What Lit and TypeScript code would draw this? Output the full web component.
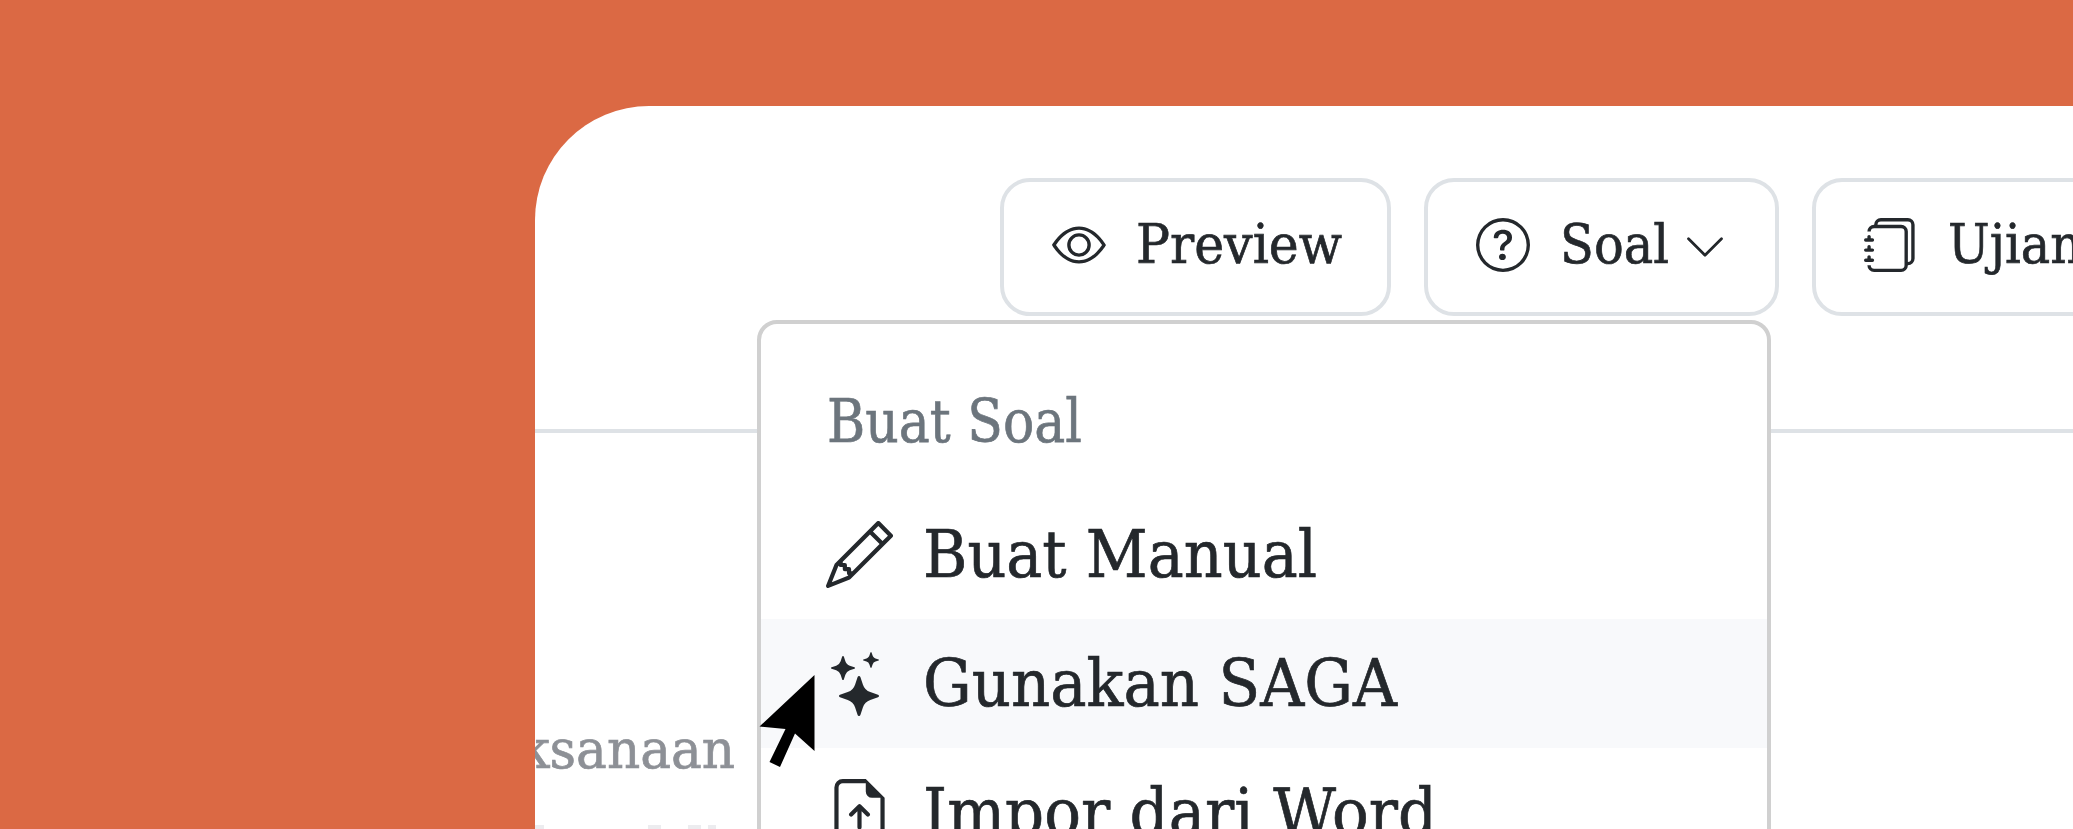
import { LitElement, html, css, svg } from "lit";
import { customElement, property } from "lit/decorators.js";

const ICONS: Record<string, string[]> = {
  eye: [
    "M16 8s-3-5.5-8-5.5S0 8 0 8s3 5.5 8 5.5S16 8 16 8M1.173 8a13 13 0 0 1 1.66-2.043C4.12 4.668 5.88 3.5 8 3.5s3.879 1.168 5.168 2.457A13 13 0 0 1 14.828 8q-.086.13-.195.288c-.335.48-.83 1.12-1.465 1.755C11.879 11.332 10.119 12.5 8 12.5s-3.879-1.168-5.168-2.457A13 13 0 0 1 1.172 8z",
    "M8 5.5a2.5 2.5 0 1 0 0 5 2.5 2.5 0 0 0 0-5M4.5 8a3.5 3.5 0 1 1 7 0 3.5 3.5 0 0 1-7 0",
  ],
  question: [
    "M8 15A7 7 0 1 1 8 1a7 7 0 0 1 0 14m0 1A8 8 0 1 0 8 0a8 8 0 0 0 0 16",
    "M5.255 5.786a.237.237 0 0 0 .241.247h.825c.138 0 .248-.113.266-.25.09-.656.54-1.134 1.342-1.134.686 0 1.314.343 1.314 1.168 0 .635-.374.927-.965 1.371-.673.489-1.206 1.06-1.168 1.987l.003.217a.25.25 0 0 0 .25.246h.811a.25.25 0 0 0 .25-.25v-.105c0-.718.273-.927 1.01-1.486.609-.463 1.244-.977 1.244-2.056 0-1.511-1.276-2.241-2.673-2.241-1.267 0-2.655.59-2.75 2.286m1.557 5.763c0 .533.425.927 1.01.927.609 0 1.028-.394 1.028-.927 0-.552-.42-.94-1.029-.94-.584 0-1.009.388-1.009.94",
  ],
  journals: [
    "M5 0h8a2 2 0 0 1 2 2v10a2 2 0 0 1-2 2 2 2 0 0 1-2 2H3a2 2 0 0 1-2-2h1a1 1 0 0 0 1 1h8a1 1 0 0 0 1-1V4a1 1 0 0 0-1-1H3a1 1 0 0 0-1 1H1a2 2 0 0 1 2-2h8a2 2 0 0 1 2 2v9a1 1 0 0 0 1-1V2a1 1 0 0 0-1-1H5a1 1 0 0 0-1 1H3a2 2 0 0 1 2-2",
    "M1 6v-.5a.5.5 0 0 1 1 0V6h.5a.5.5 0 0 1 0 1h-2a.5.5 0 0 1 0-1zm0 3v-.5a.5.5 0 0 1 1 0V9h.5a.5.5 0 0 1 0 1h-2a.5.5 0 0 1 0-1zm0 2.5v.5H.5a.5.5 0 0 0 0 1h2a.5.5 0 0 0 0-1H2v-.5a.5.5 0 0 0-1 0",
  ],
  pencil: [
    "M12.146.146a.5.5 0 0 1 .708 0l3 3a.5.5 0 0 1 0 .708l-10 10a.5.5 0 0 1-.168.11l-5 2a.5.5 0 0 1-.65-.65l2-5a.5.5 0 0 1 .11-.168zM11.207 2.5 13.5 4.793 14.793 3.5 12.5 1.207zm1.586 3L10.5 3.207 4 9.707V10h.5a.5.5 0 0 1 .5.5v.5h.5a.5.5 0 0 1 .5.5v.5h.293zm-9.761 5.175-.106.106-1.528 3.821 3.821-1.528.106-.106A.5.5 0 0 1 5 12.5V12h-.5a.5.5 0 0 1-.5-.5V11h-.5a.5.5 0 0 1-.468-.325",
  ],
  stars: [
    "M7.657 6.247c.11-.33.576-.33.686 0l.645 1.937a2.89 2.89 0 0 0 1.829 1.828l1.936.645c.33.11.33.576 0 .686l-1.937.645a2.89 2.89 0 0 0-1.828 1.829l-.645 1.936a.361.361 0 0 1-.686 0l-.645-1.937a2.89 2.89 0 0 0-1.828-1.828l-1.937-.645a.361.361 0 0 1 0-.686l1.937-.645a2.89 2.89 0 0 0 1.828-1.828zM3.794 1.148a.217.217 0 0 1 .412 0l.387 1.162c.173.518.579.924 1.097 1.097l1.162.387a.217.217 0 0 1 0 .412l-1.162.387A1.73 1.73 0 0 0 4.593 5.69l-.387 1.162a.217.217 0 0 1-.412 0L3.407 5.69A1.73 1.73 0 0 0 2.31 4.593l-1.162-.387a.217.217 0 0 1 0-.412l1.162-.387A1.73 1.73 0 0 0 3.407 2.31zM10.863.099a.145.145 0 0 1 .274 0l.258.774c.115.346.386.617.732.732l.774.258a.145.145 0 0 1 0 .274l-.774.258a1.16 1.16 0 0 0-.732.732l-.258.774a.145.145 0 0 1-.274 0l-.258-.774a1.16 1.16 0 0 0-.732-.732L9.1 2.137a.145.145 0 0 1 0-.274l.774-.258c.346-.115.617-.386.732-.732z",
  ],
  upload: [
    "M8.5 11.5a.5.5 0 0 1-1 0V7.707L6.354 8.854a.5.5 0 1 1-.708-.708l2-2a.5.5 0 0 1 .708 0l2 2a.5.5 0 0 1-.708.708L8.5 7.707z",
    "M14 14V4.5L9.5 0H4a2 2 0 0 0-2 2v12a2 2 0 0 0 2 2h8a2 2 0 0 0 2-2M9.5 3A1.5 1.5 0 0 0 11 4.5h2V14a1 1 0 0 1-1 1H4a1 1 0 0 1-1-1V2a1 1 0 0 1 1-1h5.5z",
  ],
  chevron: [
    "M1.646 4.646a.5.5 0 0 1 .708 0L8 10.293l5.646-5.647a.5.5 0 0 1 .708.708l-6 6a.5.5 0 0 1-.708 0l-6-6a.5.5 0 0 1 0-.708",
  ],
};

@customElement("ui-icon")
class UiIcon extends LitElement {
  @property() name = "eye";
  @property({ type: Number }) size = 54;
  static styles = css`
    :host { display: block; flex: none; }
    svg { display: block; fill: currentColor; }
  `;
  render() {
    return html`<svg width=${this.size} height=${this.size} viewBox="0 0 16 16">
      ${ICONS[this.name].map((d) => svg`<path d=${d}></path>`)}
    </svg>`;
  }
}

/* Serif label fitted to a fixed advance width. */
@customElement("fit-label")
class FitLabel extends LitElement {
  @property() text = "";
  @property({ type: Number }) width = 100;
  @property({ type: Number }) size = 55;
  static styles = css`
    :host { display: block; flex: none; }
    svg { display: block; overflow: visible; }
    text {
      font-family: "DejaVu Serif", serif;
      fill: currentColor; stroke: currentColor; stroke-width: 0.7px;
    }
  `;
  render() {
    return html`<svg width=${this.width} height=${this.size}>
      <text x="0" y=${this.size * 0.8} font-size=${this.size}
        textLength=${this.width} lengthAdjust="spacingAndGlyphs">${this.text}</text>
    </svg>`;
  }
}

@customElement("app-root")
class AppRoot extends LitElement {
  static styles = css`
    :host { display: block; }
    .stage {
      height: 829px; box-sizing: border-box; overflow: hidden;
      padding: 106px 0 0 535px; background: #db6944; color: #24282c;
    }
    .card {
      position: relative; height: 723px; overflow: hidden;
      background: #fff; border-top-left-radius: 114px;
    }
    .toolbar {
      display: flex; align-items: flex-start; gap: 33px;
      box-sizing: border-box; height: 327px; padding: 72px 0 0 465px;
      border-bottom: 4px solid #dee2e6;
    }
    .btn {
      display: flex; align-items: center; flex: none; box-sizing: border-box;
      height: 138px; padding: 0 45px 4px 48px;
      border: 4px solid #dee2e6; border-radius: 30px; background: #fff;
    }
    .btn.drop { padding-right: 48px; }
    .btn fit-label { margin-left: 30px; padding-top: 3px; }
    .btn .caret { margin-left: 14px; padding-top: 3px; }
    .facts { width: 200px; padding-top: 291px; color: #8d9096; }
    .facts .row { display: flex; justify-content: flex-end; margin-bottom: 46px; }
    .peek {
      display: grid; grid-template-columns: 9px 13px 13px 8px 7px;
      column-gap: 0; height: 4px; width: 230px;
    }
    .peek { grid-template-columns: 9px 104px 13px 27px 13px 7px 8px; }
    .peek i { background: #ececef; }
    .menu {
      position: absolute; left: 222px; top: 214px; width: 1014px; height: 560px;
      box-sizing: border-box; border: 4px solid #d0d0d0; border-radius: 20px;
      background: #fff; padding-top: 71px;
    }
    .heading { padding-left: 66px; height: 95px; color: #6c757d; }
    .item {
      display: flex; align-items: center; gap: 30px;
      height: 129px; box-sizing: border-box; padding-left: 65px;
    }
    .item fit-label { padding-top: 4px; }
    .item.active { background: #f8f9fb; }
    .item .stars { padding: 0 2px 0 1px; }
    .cursor { position: absolute; left: 224px; top: 569px; display: block; }
  `;

  render() {
    return html`<div class="stage">
      <div class="card">
        <div class="toolbar">
          <div class="btn">
            <ui-icon name="eye"></ui-icon>
            <fit-label text="Preview" .width=${206}></fit-label>
          </div>
          <div class="btn drop">
            <ui-icon name="question"></ui-icon>
            <fit-label text="Soal" .width=${109}></fit-label>
            <ui-icon class="caret" name="chevron" .size=${44}></ui-icon>
          </div>
          <div class="btn">
            <ui-icon name="journals"></ui-icon>
            <fit-label text="Ujian" .width=${134}></fit-label>
          </div>
        </div>
        <div class="facts">
          <div class="row"><fit-label text="Pelaksanaan" .width=${327}></fit-label></div>
          <div class="peek"><i></i><b></b><i></i><b></b><i></i><b></b><i></i></div>
        </div>
        <div class="menu">
          <div class="heading"><fit-label text="Buat Soal" .width=${255} .size=${59}></fit-label></div>
          <div class="item">
            <ui-icon name="pencil" .size=${67}></ui-icon>
            <fit-label text="Buat Manual" .width=${394} .size=${66}></fit-label>
          </div>
          <div class="item active">
            <ui-icon class="stars" name="stars" .size=${64}></ui-icon>
            <fit-label text="Gunakan SAGA" .width=${474} .size=${66}></fit-label>
          </div>
          <div class="item">
            <ui-icon name="upload" .size=${67}></ui-icon>
            <fit-label text="Impor dari Word" .width=${514} .size=${66}></fit-label>
          </div>
        </div>
        <svg class="cursor" width="56" height="93" viewBox="759 675 56 93">
          <path d="M814.5 675V751L795 733.5L780 767L769.5 762L785.5 729L759.5 726.5Z"></path>
        </svg>
      </div>
    </div>`;
  }
}
